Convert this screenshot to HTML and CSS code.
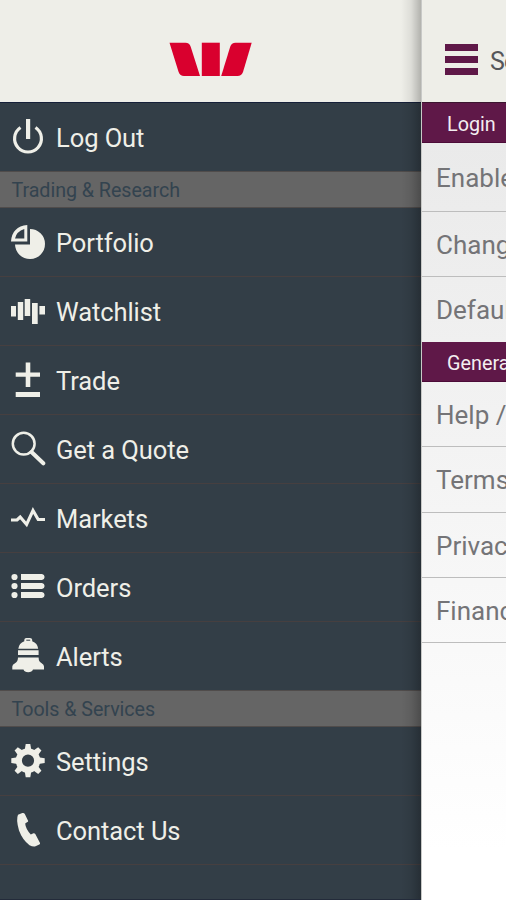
FILE: index.html
```html
<!DOCTYPE html>
<html lang="en">
<head>
<meta charset="utf-8">
<title>Menu</title>
<link rel="stylesheet" href="styles.css">
</head>
<body>
<div class="app">
  <nav class="drawer">
    <header class="brand">
      <svg class="logo" width="84" height="36" viewBox="168 41 84 36"><g fill="#d9002e"><path d="M169.500 42.700H185.500Q189.500 42.700 190.700 46.700L200 76H184Q180 76 178.600 72Z"/><path d="M201.800 42.700H219.800V76H201.800Z"/><path d="M251.700 42.700H235.500Q231.500 42.700 230.200 46.700L221.200 76H237.500Q241.500 76 243 72Z"/></g></svg>
    </header>
    <a class="item last"><svg class="icon" viewBox="10 117 36 40"><path d="M20.500 127.500A13.400 13.400 0 1 0 35.500 127.500" fill="none" stroke="#efefe8" stroke-width="3.200"/><path d="M26 119h4.200v20H26z"/></svg><span>Log Out</span></a>
    <h2 class="section">Trading &amp; Research</h2>
    <a class="item"><svg class="icon" viewBox="10 222 36 40"><path d="M30 229A15 15 0 1 1 15 244.500H30Z"/><path fill-rule="evenodd" d="M27.300 225V241.500H11Q12 226.500 27.300 225ZM24.300 229Q16.500 231.500 15 238.500H24.300Z"/></svg><span>Portfolio</span></a>
    <a class="item"><svg class="icon" viewBox="10 291 36 40"><path d="M11 306h5v10.500h-5zM17.800 302h5.400v18h-5.400zM24.700 299h5.500v17h-5.500zM32 303h5.700v21H32zM39.400 306h5.600v8.500h-5.600z"/></svg><span>Watchlist</span></a>
    <a class="item"><svg class="icon" viewBox="10 360 36 40"><path d="M25.700 362.500h4.600v10H40v4.300h-9.700v10.200h-4.600v-10.200H15.700v-4.300h10zM15.700 392H40v4.900H15.700z"/></svg><span>Trade</span></a>
    <a class="item"><svg class="icon" viewBox="10 429 36 40"><g fill="none" stroke="#efefe8"><circle cx="23.700" cy="443.700" r="10.900" stroke-width="2.500"/><path d="M31.500 452L43.300 463.300" stroke-width="4" stroke-linecap="round"/></g></svg><span>Get a Quote</span></a>
    <a class="item"><svg class="icon" viewBox="10 498 36 40"><path d="M11 520H17L20.200 517L26.600 524.500L33 510.500L38.200 519.500H45" fill="none" stroke="#efefe8" stroke-width="3.100"/></svg><span>Markets</span></a>
    <a class="item"><svg class="icon" viewBox="10 567 36 40"><circle cx="14.500" cy="577" r="3.100"/><circle cx="14.500" cy="586" r="3.100"/><circle cx="14.500" cy="595" r="3.100"/><path d="M21 574.100H42Q44.600 574.500 44.600 577T42 580H21zM21 583.100H42Q44.600 583.500 44.600 586T42 589H21zM21 592.100H42Q44.600 592.500 44.600 595T42 598H21z"/></svg><span>Orders</span></a>
    <a class="item last"><svg class="icon" viewBox="10 636 36 40"><path d="M18.300 648.800Q19 643 24.300 641.200V639.800Q24.500 638 26.300 638H30Q32 638 32.200 639.800V641.200Q37.500 643 38.200 648.800Z"/><path d="M18 650.300H38.600V655H18zM18 657.600H38.600Q38.700 662 41.700 663.300Q44 664.500 44 666.500V669.600H33Q32 672.200 28.200 672.200T23.500 669.600H12.300V666.500Q12.300 664.500 15 663.300Q18 661.500 18 657.600Z"/><path d="M26.300 639.700h3.900v1h-3.900z" fill="#333e47"/></svg><span>Alerts</span></a>
    <h2 class="section">Tools &amp; Services</h2>
    <a class="item"><svg class="icon" viewBox="10 741 36 40"><g transform="translate(28 760.600)"><circle r="9.200" fill="none" stroke="#efefe8" stroke-width="6.200"/><g id="teeth"><path id="tooth" d="M-3.300 -10.500L-2.300 -16.700H2.300L3.300 -10.500Z"/><use href="#tooth" transform="rotate(45)"/><use href="#tooth" transform="rotate(90)"/><use href="#tooth" transform="rotate(135)"/></g><use href="#teeth" transform="rotate(180)"/></g></svg><span>Settings</span></a>
    <a class="item"><svg class="icon" viewBox="10 810 36 40"><path d="M18 814.800L22.300 813Q24 812.500 24.800 814L28.200 821Q28.200 822 27 822.300L25.200 823.400Q25.500 828.500 30.800 834.500L33.500 833.300Q34.500 833 35.300 834L40 843Q40.300 844 39.300 844.500L35.500 846.300Q33 847 29.500 845.200Q22.500 840 19 830.500Q15.800 819.500 18 814.800Z"/></svg><span>Contact Us</span></a>
  </nav>
  <main class="page">
    <header class="bar"><div class="burger"><i></i><i></i><i></i></div><h1>Settings</h1></header>
    <h2 class="group">Login</h2>
    <ul class="list">
      <li class="tall">Enable</li>
      <li>Change</li>
      <li class="end">Default</li>
    </ul>
    <h2 class="group">General</h2>
    <ul class="list">
      <li>Help /</li>
      <li>Terms</li>
      <li>Privacy</li>
      <li>Financial</li>
    </ul>
  </main>
</div>
</body>
</html>
```
FILE: styles.css
```css
* { box-sizing: border-box; }
body { margin: 0; font-family: Roboto, "Liberation Sans", sans-serif; }
h1, h2, ul { margin: 0; padding: 0; font-weight: 400; }
.app { display: flex; width: 506px; height: 900px; overflow: hidden; }
.drawer { position: relative; flex: 0 0 421px; height: 900px; background: #333e47; border-bottom: 1px solid #232b3a; }
.drawer::after { content: ""; position: absolute; top: 0; right: 0; bottom: 0; width: 20px; background: linear-gradient(to right, rgba(0,0,0,0), rgba(0,0,0,.07) 50%, rgba(0,0,0,.25)); }
.brand { height: 103px; background: #eeeee8; border-bottom: 1px solid #162039; padding: 41px 0 0 168px; }
.logo { display: block; }
.item { display: flex; align-items: center; height: 69px; padding-left: 10px; border-bottom: 1px solid #463f40; color: #efefe8; font-size: 25.5px; letter-spacing: -.07px; white-space: nowrap; }
.item.last { height: 68px; border-bottom: 0; }
.icon { width: 36px; height: 40px; fill: #efefe8; margin-right: 10px; }
.item span { padding-top: 1px; }
.section { height: 37px; padding-left: 11.500px; background: #656565; border-top: 1px solid #504c4b; border-bottom: 1px solid #504c4b; color: #33434f; font-size: 19.700px; line-height: 38px; letter-spacing: -.05px; }
.page { flex: 0 0 85px; height: 900px; overflow: hidden; border-left: 1px solid #c8c9c7; background: linear-gradient(#eaeaea 143px, #fff 850px); white-space: nowrap; }
.bar { display: flex; height: 103px; background: #eeeee8; border-bottom: 1px solid #3c1530; }
.burger { display: flex; flex-direction: column; gap: 5px; flex: 0 0 33px; margin: 44px 12px 0 23px; }
.burger i { height: 7px; background: #5f1848; }
.bar h1 { padding-top: 46px; font-size: 25px; line-height: 32px; letter-spacing: -.8px; color: #55565a; }
.group { height: 40px; margin-left: -1px; padding-left: 26px; background: #5f1848; border-bottom: 1px solid #4c0b38; color: #f3eef1; font-size: 19.800px; line-height: 44px; }
.list { list-style: none; color: #747477; font-size: 26px; }
.list li { height: 65.300px; padding-left: 14px; border-bottom: 1px solid #bdbdbd; line-height: 67px; }
.list li.tall { height: 68.500px; line-height: 71px; }
.list li.end { border: 0; }
```
